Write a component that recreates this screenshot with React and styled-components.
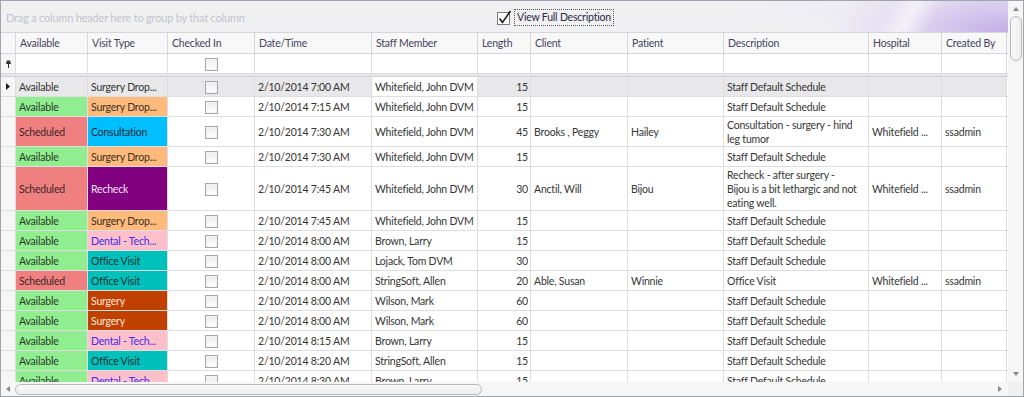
import React from "react";
import styled, { createGlobalStyle } from "styled-components";

const GlobalStyle = createGlobalStyle`
  html, body {
    margin: 0;
    padding: 0;
    background: #ffffff;
  }
  body {
    font-family: "Lato", "Open Sans", sans-serif;
    font-size: 10.5px;
    letter-spacing: -0.2px;
    color: #333333;
  }
`;

const COLS = "15px 72px 80px 87px 117px 106px 53px 97px 96px 145px 73px 65px";

const STATUS = {
  Available: { bg: "#90ee90", fg: "#2a3a2a" },
  Scheduled: { bg: "#f08080", fg: "#3a2626" },
};

const TYPES = {
  drop: { label: "Surgery Drop...", bg: "#ffba7c", fg: "#3a3026" },
  consult: { label: "Consultation", bg: "#00bfff", fg: "#1a2a36" },
  recheck: { label: "Recheck", bg: "#800080", fg: "#f4e6f4" },
  dental: { label: "Dental - Tech...", bg: "#ffc0cb", fg: "#3a2cf0" },
  office: { label: "Office Visit", bg: "#00c0bc", fg: "#143030" },
  surgery: { label: "Surgery", bg: "#c04000", fg: "#fbe8dc" },
};

const SDS = ["Staff Default Schedule"];

const rows = [
  { status: "Available", type: "drop", time: "2/10/2014 7:00 AM", staff: "Whitefield, John DVM", len: 15, desc: SDS, selected: true },
  { status: "Available", type: "drop", time: "2/10/2014 7:15 AM", staff: "Whitefield, John DVM", len: 15, desc: SDS },
  {
    status: "Scheduled", type: "consult", time: "2/10/2014 7:30 AM", staff: "Whitefield, John DVM", len: 45,
    client: "Brooks , Peggy", patient: "Hailey",
    desc: ["Consultation - surgery - hind", "leg tumor"], hospital: "Whitefield ...", by: "ssadmin",
  },
  { status: "Available", type: "drop", time: "2/10/2014 7:30 AM", staff: "Whitefield, John DVM", len: 15, desc: SDS },
  {
    status: "Scheduled", type: "recheck", time: "2/10/2014 7:45 AM", staff: "Whitefield, John DVM", len: 30,
    client: "Anctil, Will", patient: "Bijou",
    desc: ["Recheck - after surgery -", "Bijou is a bit lethargic and not", "eating well."], hospital: "Whitefield ...", by: "ssadmin",
  },
  { status: "Available", type: "drop", time: "2/10/2014 7:45 AM", staff: "Whitefield, John DVM", len: 15, desc: SDS },
  { status: "Available", type: "dental", time: "2/10/2014 8:00 AM", staff: "Brown, Larry", len: 15, desc: SDS },
  { status: "Available", type: "office", time: "2/10/2014 8:00 AM", staff: "Lojack, Tom DVM", len: 30, desc: SDS },
  {
    status: "Scheduled", type: "office", time: "2/10/2014 8:00 AM", staff: "StringSoft, Allen", len: 20,
    client: "Able, Susan", patient: "Winnie", desc: ["Office Visit"], hospital: "Whitefield ...", by: "ssadmin",
  },
  { status: "Available", type: "surgery", time: "2/10/2014 8:00 AM", staff: "Wilson, Mark", len: 60, desc: SDS },
  { status: "Available", type: "surgery", time: "2/10/2014 8:00 AM", staff: "Wilson, Mark", len: 60, desc: SDS },
  { status: "Available", type: "dental", time: "2/10/2014 8:15 AM", staff: "Brown, Larry", len: 15, desc: SDS },
  { status: "Available", type: "office", time: "2/10/2014 8:20 AM", staff: "StringSoft, Allen", len: 15, desc: SDS },
  { status: "Available", type: "dental", time: "2/10/2014 8:30 AM", staff: "Brown, Larry", len: 15, desc: SDS },
];

const headers = [
  "Available", "Visit Type", "Checked In", "Date/Time", "Staff Member", "Length",
  "Client", "Patient", "Description", "Hospital", "Created By",
];

const Frame = styled.div`
  width: 1024px;
  height: 397px;
  box-sizing: border-box;
  border: 1px solid #a3a3ab;
  display: grid;
  grid-template-columns: 1fr 15px;
  grid-template-rows: 1fr 14px;
  background: #ffffff;
  overflow: hidden;
`;

const Main = styled.div`
  display: flex;
  flex-direction: column;
  min-height: 0;
  overflow: hidden;
`;

const GroupPanel = styled.div`
  height: 31px;
  flex: none;
  display: flex;
  align-items: center;
  padding-left: 5px;
  background:
    linear-gradient(118deg, transparent 0 87%, rgba(255, 255, 255, 0.6) 89.5%, transparent 92%),
    radial-gradient(ellipse 180px 60px at 100% 100%, #c3aee5 0%, #d4c6ee 35%, rgba(224, 215, 240, 0.75) 62%, transparent 100%),
    radial-gradient(ellipse 280px 50px at 100% 0%, #e0d6f1 0%, rgba(236, 232, 244, 0.6) 50%, transparent 100%),
    #f0f0f3;
`;

const GroupHint = styled.span`
  width: 491px;
  flex: none;
  color: #c3c3cb;
  font-size: 11px;
  margin-top: 1px;
`;

const ViewToggle = styled.label`
  display: flex;
  align-items: center;
  gap: 2px;
  margin-top: 2px;
`;

const ToggleText = styled.span`
  border: 1px dotted #555;
  padding: 1px 2px;
  color: #2a2a3a;
  line-height: 13px;
`;

const GridRow = styled.div`
  display: grid;
  grid-template-columns: ${COLS};
  flex: none;
`;

const HeaderRow = styled(GridRow)`
  height: 20px;
  border-top: 1px solid #d6d6d9;
  border-bottom: 1px solid #d6d6d9;
  background: #f8f8f9;
`;

const HeaderCell = styled.div`
  display: flex;
  align-items: center;
  padding-left: 4px;
  border-right: 1px solid #d6d6d9;
  color: #44445e;
  white-space: nowrap;
  overflow: hidden;
`;

const FilterRow = styled(GridRow)`
  height: 19px;
  border-bottom: 1px solid #dcdcdc;
  background: #ffffff;
`;

const Separator = styled.div`
  height: 2px;
  flex: none;
  border-bottom: 1px solid #d2d2d2;
  background: #e6e6e8;
`;

const Body = styled.div`
  flex: 1;
  min-height: 0;
  overflow: hidden;
`;

const DataRow = styled(GridRow)`
  border-bottom: 1px solid #dedede;
  min-height: 19px;
`;

const Cell = styled.div`
  display: flex;
  flex-direction: column;
  justify-content: center;
  align-items: ${(p) => (p.$align === "right" ? "flex-end" : p.$align === "center" ? "center" : "flex-start")};
  padding: 1px 2px 0 3px;
  border-right: 1px solid #dedede;
  background: ${(p) => (p.$focused ? "#ffffff" : p.$selected ? "#e8e8ea" : p.$bg || "transparent")};
  color: ${(p) => (p.$selected ? "#333" : p.$fg || "#363636")};
  line-height: 14px;
  white-space: nowrap;
  overflow: hidden;
  min-width: 0;
`;

const IndicatorCell = styled.div`
  display: flex;
  align-items: center;
  justify-content: center;
  border-right: 1px solid #dedede;
  background: #f6f6f7;
`;

const Line = styled.span`
  display: block;
  overflow: hidden;
  text-overflow: ellipsis;
  max-width: 100%;
`;

const CellCheck = styled.span`
  display: block;
  width: 11px;
  height: 11px;
  border: 1px solid #a6a6a6;
  background: linear-gradient(#ececec, #ffffff);
  box-shadow: inset 0 0 0 1px #f4f4f4;
`;

const VScroll = styled.div`
  grid-row: 1;
  grid-column: 2;
  display: flex;
  flex-direction: column;
  align-items: center;
  background: #f6f6f6;
  padding: 6px 0 6px;
`;

const HScroll = styled.div`
  grid-row: 2;
  grid-column: 1;
  display: flex;
  align-items: center;
  background: #f6f6f6;
  padding: 0 6px 0 5px;
`;

const Corner = styled.div`
  grid-row: 2;
  grid-column: 2;
  background: #f0f0f0;
`;

const VThumb = styled.div`
  width: 10px;
  height: 43px;
  margin-top: 5px;
  border: 1px solid #b8b8b8;
  border-radius: 6px;
  background: linear-gradient(90deg, #f8f8f8, #eeeeee);
`;

const HThumb = styled.div`
  width: 465px;
  height: 9px;
  margin-left: 5px;
  border: 1px solid #b8b8b8;
  border-radius: 6px;
  background: linear-gradient(#f8f8f8, #eeeeee);
`;

const Spacer = styled.div`
  flex: 1;
`;

function Arrow({ dir }) {
  const pts = {
    up: "0,4 3,0 6,4",
    down: "0,0 6,0 3,4",
    left: "4,0 4,6 0,3",
    right: "0,0 4,3 0,6",
  }[dir];
  const vertical = dir === "up" || dir === "down";
  return (
    <svg width={vertical ? 6 : 4} height={vertical ? 4 : 6} viewBox={vertical ? "0 0 6 4" : "0 0 4 6"}>
      <polygon points={pts} fill="#8a8a8a" />
    </svg>
  );
}

function FocusArrow() {
  return (
    <svg width="4" height="7" viewBox="0 0 4 7">
      <polygon points="0,0 4,3.5 0,7" fill="#1a1a1a" />
    </svg>
  );
}

function FilterPin() {
  return (
    <svg width="5" height="8" viewBox="0 0 5 8">
      <rect x="0.5" y="0.5" width="4" height="3" rx="1" fill="#333" />
      <rect x="0" y="3" width="5" height="1" fill="#333" />
      <rect x="2" y="4" width="1" height="4" fill="#333" />
    </svg>
  );
}

function BigCheck() {
  return (
    <svg width="15" height="16" viewBox="0 0 15 16">
      <rect x="0.5" y="2.5" width="12" height="12" fill="#ffffff" stroke="#7a7a7a" />
      <path d="M2.5 8.5 L5.5 12.5 L13.5 1" fill="none" stroke="#1c1c1c" strokeWidth="1.6" />
    </svg>
  );
}

function Row({ row }) {
  const st = STATUS[row.status];
  const tp = TYPES[row.type];
  const sel = !!row.selected;
  return (
    <DataRow>
      <IndicatorCell>{sel && <FocusArrow />}</IndicatorCell>
      <Cell $bg={st.bg} $fg={st.fg} $selected={sel}><Line>{row.status}</Line></Cell>
      <Cell $bg={tp.bg} $fg={tp.fg} $selected={sel}><Line>{tp.label}</Line></Cell>
      <Cell $align="center" $selected={sel}><CellCheck /></Cell>
      <Cell $selected={sel}><Line>{row.time}</Line></Cell>
      <Cell $selected={sel} $focused={sel}><Line>{row.staff}</Line></Cell>
      <Cell $align="right" $selected={sel}><Line>{row.len}</Line></Cell>
      <Cell $selected={sel}><Line>{row.client}</Line></Cell>
      <Cell $selected={sel}><Line>{row.patient}</Line></Cell>
      <Cell $selected={sel}>
        {row.desc.map((d, i) => (
          <Line key={i}>{d}</Line>
        ))}
      </Cell>
      <Cell $selected={sel}><Line>{row.hospital}</Line></Cell>
      <Cell $selected={sel}><Line>{row.by}</Line></Cell>
    </DataRow>
  );
}

export default function App() {
  return (
    <>
      <GlobalStyle />
      <Frame>
        <Main>
          <GroupPanel>
            <GroupHint>Drag a column header here to group by that column</GroupHint>
            <ViewToggle>
              <BigCheck />
              <ToggleText>View Full Description</ToggleText>
            </ViewToggle>
          </GroupPanel>
          <HeaderRow>
            <HeaderCell />
            {headers.map((h) => (
              <HeaderCell key={h}>{h}</HeaderCell>
            ))}
          </HeaderRow>
          <FilterRow>
            <IndicatorCell>
              <FilterPin />
            </IndicatorCell>
            {headers.map((h) => (
              <Cell key={h} $align={h === "Checked In" ? "center" : "left"}>
                {h === "Checked In" && <CellCheck />}
              </Cell>
            ))}
          </FilterRow>
          <Separator />
          <Body>
            {rows.map((r, i) => (
              <Row key={i} row={r} />
            ))}
          </Body>
        </Main>
        <VScroll>
          <Arrow dir="up" />
          <VThumb />
          <Spacer />
          <Arrow dir="down" />
        </VScroll>
        <HScroll>
          <Arrow dir="left" />
          <HThumb />
          <Spacer />
          <Arrow dir="right" />
        </HScroll>
        <Corner />
      </Frame>
    </>
  );
}
